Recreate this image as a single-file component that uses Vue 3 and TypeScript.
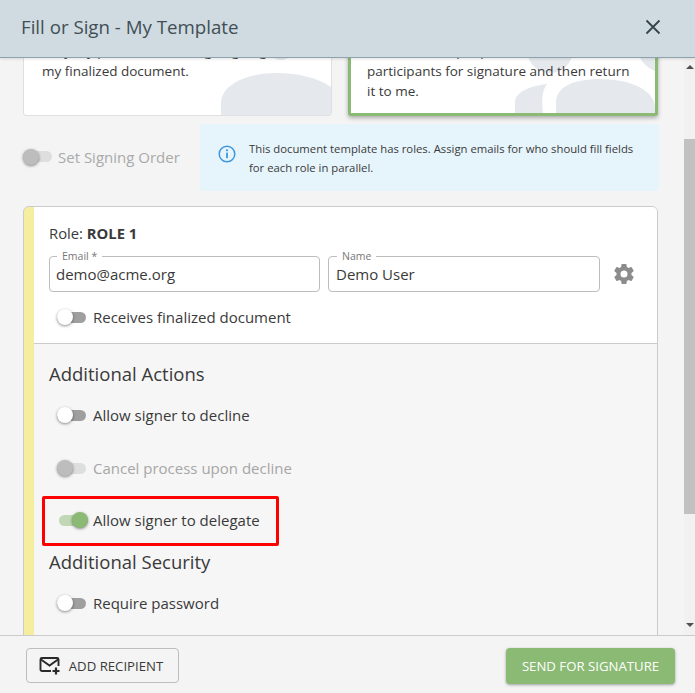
<template>
  <div class="dialog">
    <header class="dialog__head">
      <h1 class="dialog__title">Fill or Sign - My Template</h1>
      <button type="button" class="dialog__close" aria-label="Close">
        <svg width="16" height="16" viewBox="0 0 16 16"><path d="M1.5 1.5l13 13M14.5 1.5l-13 13" stroke="#37434a" stroke-width="1.8" fill="none" /></svg>
      </button>
    </header>

    <div class="dialog__body">
      <main class="scroller">
        <div class="choice-row">
          <div class="choice">
            <svg class="choice__art" width="110" height="60" viewBox="221 56 110 60">
              <circle cx="281" cy="47" r="14" fill="#e5e9ed" />
              <path d="M221 116V104C221 86 246 74 277 74C298 74 318 79 331 88V116Z" fill="#e5e9ed" />
            </svg>
            <p class="choice__text">Only my part is needed, signing to get<br />my finalized document.</p>
          </div>
          <div class="choice choice--active">
            <svg class="choice__art" width="140" height="57" viewBox="515 56 140 57">
              <circle cx="550" cy="50" r="23" fill="#e5e9ed" />
              <circle cx="665" cy="45" r="28" fill="#e5e9ed" />
              <path d="M515 113V102C515 93 528 86 547 84C541 92 542 103 543 113Z" fill="#e5e9ed" />
              <path d="M556 113V102C556 88 572 79 600 79C630 79 655 90 655 108V113Z" fill="#e5e9ed" />
            </svg>
            <p class="choice__text">Send to other people to add their<br />participants for signature and then return<br />it to me.</p>
          </div>
        </div>

        <div class="order-row">
          <label class="toggle-row toggle-row--order toggle-row--disabled">
            <span class="toggle toggle--off" /> Set Signing Order
          </label>
          <div class="notice">
            <svg class="notice__icon" width="18" height="18" viewBox="0 0 18 18">
              <circle cx="9" cy="9" r="7.8" fill="none" stroke="#3f97dc" stroke-width="1.5" />
              <circle cx="9" cy="5.3" r="1.1" fill="#3f97dc" />
              <rect x="8.1" y="7.6" width="1.8" height="5.6" fill="#3f97dc" />
            </svg>
            <p>This document template has roles. Assign emails for who should fill fields for each role in parallel.</p>
          </div>
        </div>

        <section class="role-card">
          <div class="role-card__main">
            <div class="role-card__name">Role: <strong>ROLE 1</strong></div>
            <div class="fields">
              <div class="field">
                <span class="field__legend">Email *</span>
                <input class="field__input" value="demo@acme.org" />
              </div>
              <div class="field field--name">
                <span class="field__legend">Name</span>
                <input class="field__input" value="Demo User" />
              </div>
              <svg class="fields__gear" width="24" height="24" viewBox="0 0 24 24">
                <path fill="#8c8c8c" d="M12 15.5A3.5 3.5 0 1 1 12 8.5a3.5 3.5 0 0 1 0 7zm7.43-2.53c.04-.32.07-.64.07-.97s-.03-.66-.07-1l2.11-1.63c.19-.15.24-.42.12-.64l-2-3.46c-.12-.22-.39-.31-.61-.22l-2.49 1c-.52-.39-1.06-.73-1.69-.98l-.37-2.65A.506.506 0 0 0 14 2h-4c-.25 0-.46.18-.5.42l-.37 2.65c-.63.25-1.17.59-1.69.98l-2.49-1c-.22-.09-.49 0-.61.22l-2 3.46c-.13.22-.07.49.12.64L4.57 11c-.04.34-.07.67-.07 1s.03.65.07.97l-2.11 1.66c-.19.15-.25.42-.12.64l2 3.46c.12.22.39.3.61.22l2.49-1.01c.52.4 1.06.74 1.69.99l.37 2.65c.04.24.25.42.5.42h4c.25 0 .46-.18.5-.42l.37-2.65c.63-.26 1.17-.59 1.69-.99l2.49 1.01c.22.08.49 0 .61-.22l2-3.46c.12-.22.07-.49-.12-.64l-2.11-1.66z" />
              </svg>
            </div>
            <label class="toggle-row toggle-row--receive">
              <span class="toggle toggle--off" /> Receives finalized document
            </label>
          </div>

          <div class="role-card__extra">
            <h2 class="section-title">Additional Actions</h2>
            <label class="toggle-row toggle-row--decline">
              <span class="toggle toggle--off" /> Allow signer to decline
            </label>
            <label class="toggle-row toggle-row--cancel toggle-row--disabled">
              <span class="toggle toggle--off" /> Cancel process upon decline
            </label>
            <div class="highlight">
              <label class="toggle-row toggle-row--delegate">
                <span class="toggle toggle--on" /> Allow signer to delegate
              </label>
            </div>
            <h2 class="section-title section-title--security">Additional Security</h2>
            <label class="toggle-row toggle-row--password">
              <span class="toggle toggle--off" /> Require password
            </label>
          </div>
        </section>
      </main>

      <div class="scrollbar">
        <span class="scrollbar__arrow scrollbar__arrow--up" />
        <div class="scrollbar__thumb" />
        <span class="scrollbar__arrow scrollbar__arrow--down" />
      </div>
    </div>

    <footer class="dialog__foot">
      <button type="button" class="btn btn--add">
        <svg width="22" height="20" viewBox="0 0 22 20">
          <path d="M12 15H3a1.5 1.5 0 0 1-1.5-1.5v-10A1.5 1.5 0 0 1 3 2h15a1.5 1.5 0 0 1 1.5 1.5V10" fill="none" stroke="#2a2a2a" stroke-width="1.9" />
          <path d="M2 3.5l8.5 6 8.5-6" fill="none" stroke="#2a2a2a" stroke-width="1.9" />
          <path d="M17 11.5v7M13.5 15h7" stroke="#2a2a2a" stroke-width="2.2" fill="none" />
        </svg>
        ADD RECIPIENT
      </button>
      <button type="button" class="btn btn--send">SEND FOR SIGNATURE</button>
    </footer>
  </div>
</template>

<script setup lang="ts">
</script>

<style>
html,
body {
  margin: 0;
  background: #f4f4f4;
}
</style>

<style scoped>
.dialog {
  display: flex;
  flex-direction: column;
  width: 695px;
  height: 693px;
  overflow: hidden;
  color: #3a3a3a;
  font-family: "Open Sans", "Liberation Sans", sans-serif;
  background: #f4f4f4;
}

.dialog__head {
  position: relative;
  z-index: 2;
  display: flex;
  flex: none;
  align-items: center;
  justify-content: space-between;
  box-sizing: border-box;
  height: 58px;
  padding: 0 34px 4px 21px;
  background: #cfdbe1;
  border-bottom: 1px solid #8ea3ae;
  box-shadow: 0 1px 3px rgba(0, 0, 0, 0.12);
}

.dialog__title {
  margin: 0;
  color: #424e55;
  font-size: 18.7px;
  font-weight: 400;
}

.dialog__close {
  display: flex;
  padding: 0;
  background: none;
  border: 0;
}

.dialog__body {
  display: flex;
  flex: 1;
  min-height: 0;
}

.scroller {
  flex: 1;
  min-width: 0;
  padding: 0 26px 0 23px;
  overflow: hidden;
}

.choice-row {
  display: grid;
  grid-template-columns: 309px 310px;
  gap: 16px;
  margin-top: -40px;
}

.choice {
  position: relative;
  box-sizing: border-box;
  height: 98px;
  padding: 22px 18px 0;
  overflow: hidden;
  background: #fff;
  border: 1px solid #e0e0e0;
  border-radius: 3px;
}

.choice--active {
  height: 98px;
  padding: 20px 16px 0;
  border: 3px solid #8aba74;
  box-shadow: 0 2px 4px rgba(0, 0, 0, 0.3);
}

.choice__art {
  position: absolute;
  right: 0;
  bottom: 0;
}

.choice__text {
  position: relative;
  margin: 0;
  font-size: 13.5px;
  line-height: 20px;
  white-space: nowrap;
}

.order-row {
  display: flex;
  align-items: center;
  margin: 8px -1px 0 0;
}

.notice {
  display: flex;
  flex: none;
  align-items: center;
  box-sizing: border-box;
  width: 459px;
  height: 67px;
  margin-left: auto;
  padding: 0 18px;
  background: #e6f4fc;
  border-radius: 3px;
}

.notice__icon {
  flex: none;
  margin: -7px 13px 0 0;
}

.notice p {
  margin: 0;
  font-size: 11.3px;
  line-height: 19px;
}

.toggle-row {
  display: flex;
  align-items: center;
  gap: 7px;
  font-size: 15px;
  white-space: nowrap;
}

.toggle-row--disabled {
  color: #a6a6a6;
}

.toggle {
  position: relative;
  flex: none;
  width: 29px;
  height: 11px;
  background: #9f9f9f;
  border-radius: 6px;
}

.toggle::after {
  position: absolute;
  top: -2.5px;
  left: 0;
  width: 16px;
  height: 16px;
  content: "";
  background: #fff;
  border-radius: 50%;
  box-shadow: 0 1px 3px rgba(0, 0, 0, 0.45);
}

.toggle--on {
  background: #c0d9b4;
}

.toggle--on::after {
  left: 13px;
  background: #8aba74;
}

.toggle-row--disabled .toggle {
  background: #dedede;
}

.toggle-row--disabled .toggle::after {
  background: #bdbdbd;
}

.toggle-row--order {
  gap: 6px;
  margin-top: -2px;
  color: #aaa;
}

.role-card {
  margin-top: 15px;
  overflow: hidden;
  background: #f6f6f6;
  border: 1px solid #cbcbcb;
  border-radius: 6px 6px 0 0;
  box-shadow: inset 10px 0 0 #f5ee9e;
}

.role-card__main {
  box-sizing: border-box;
  height: 137px;
  margin-left: 10px;
  padding: 16px 15px 0;
  background: #fff;
  border-bottom: 1px solid #cbcbcb;
}

.role-card__name {
  font-size: 14.8px;
  line-height: 20px;
}

.fields {
  display: flex;
  align-items: center;
  gap: 8px;
  margin-top: 13px;
}

.field {
  position: relative;
  width: 271px;
}

.field--name {
  width: 272px;
}

.field__legend {
  position: absolute;
  top: -6px;
  left: 8px;
  padding: 0 5px;
  color: #777;
  font-size: 10.5px;
  line-height: 12px;
  background: #fff;
}

.field--name .field__legend {
  left: 9px;
}

.field__input {
  display: block;
  box-sizing: border-box;
  width: 100%;
  height: 36px;
  padding: 0 6px;
  color: #3a3a3a;
  font: inherit;
  font-size: 15px;
  background: #fff;
  border: 1px solid #bdbdbd;
  border-radius: 4px;
}

.field--name .field__input {
  padding: 0 7px;
}

.fields__gear {
  margin-left: 4px;
}

.toggle-row--receive {
  margin: 15px 0 0 8px;
  line-height: 20px;
}

.role-card__extra {
  margin-left: 10px;
  padding: 17px 15px 60px;
}

.section-title {
  margin: 0;
  font-size: 18.5px;
  font-weight: 400;
  line-height: 25px;
}

.section-title--security {
  margin-top: 3px;
}

.toggle-row--decline {
  margin: 19px 0 0 8px;
  line-height: 20px;
}

.toggle-row--cancel {
  margin: 33px 0 0 8px;
  line-height: 20px;
}

.highlight {
  display: flex;
  align-items: center;
  box-sizing: border-box;
  width: 237px;
  height: 50px;
  margin: 18px 0 0 -7px;
  padding: 0 0 2px 14px;
  border: 3px solid #f00;
  border-radius: 2px;
}

.toggle-row--delegate {
  gap: 5px;
}

.toggle-row--password {
  margin: 19px 0 0 8px;
  line-height: 20px;
}

.scrollbar {
  display: flex;
  flex: none;
  flex-direction: column;
  align-items: center;
  width: 11px;
  background: #f1f1f1;
}

.scrollbar__arrow {
  width: 0;
  height: 0;
  border-right: 4px solid transparent;
  border-left: 4px solid transparent;
}

.scrollbar__arrow--up {
  margin-top: 7px;
  border-bottom: 4px solid #505050;
}

.scrollbar__arrow--down {
  margin: auto 0 8px;
  border-top: 4px solid #505050;
}

.scrollbar__thumb {
  align-self: stretch;
  height: 375px;
  margin-top: 70px;
  background: #c1c1c1;
}

.dialog__foot {
  position: relative;
  display: flex;
  flex: none;
  align-items: flex-start;
  justify-content: space-between;
  box-sizing: border-box;
  height: 58px;
  padding: 12px 20px 0 26px;
  background: #f4f4f4;
  border-top: 1px solid #cbcbcb;
}

.btn {
  display: flex;
  align-items: center;
  justify-content: center;
  box-sizing: border-box;
  height: 35px;
  font-family: inherit;
  font-size: 13.2px;
  border-radius: 4px;
}

.btn--add {
  gap: 8px;
  width: 153px;
  padding: 0 3px 0 0;
  color: #3a3a3a;
  background: #f4f4f4;
  border: 1px solid #bdbdbd;
}

.btn--send {
  width: 169px;
  height: 36px;
  color: #fff;
  background: #8aba74;
  border: 0;
  box-shadow: 0 1px 3px rgba(0, 0, 0, 0.35);
}
</style>
